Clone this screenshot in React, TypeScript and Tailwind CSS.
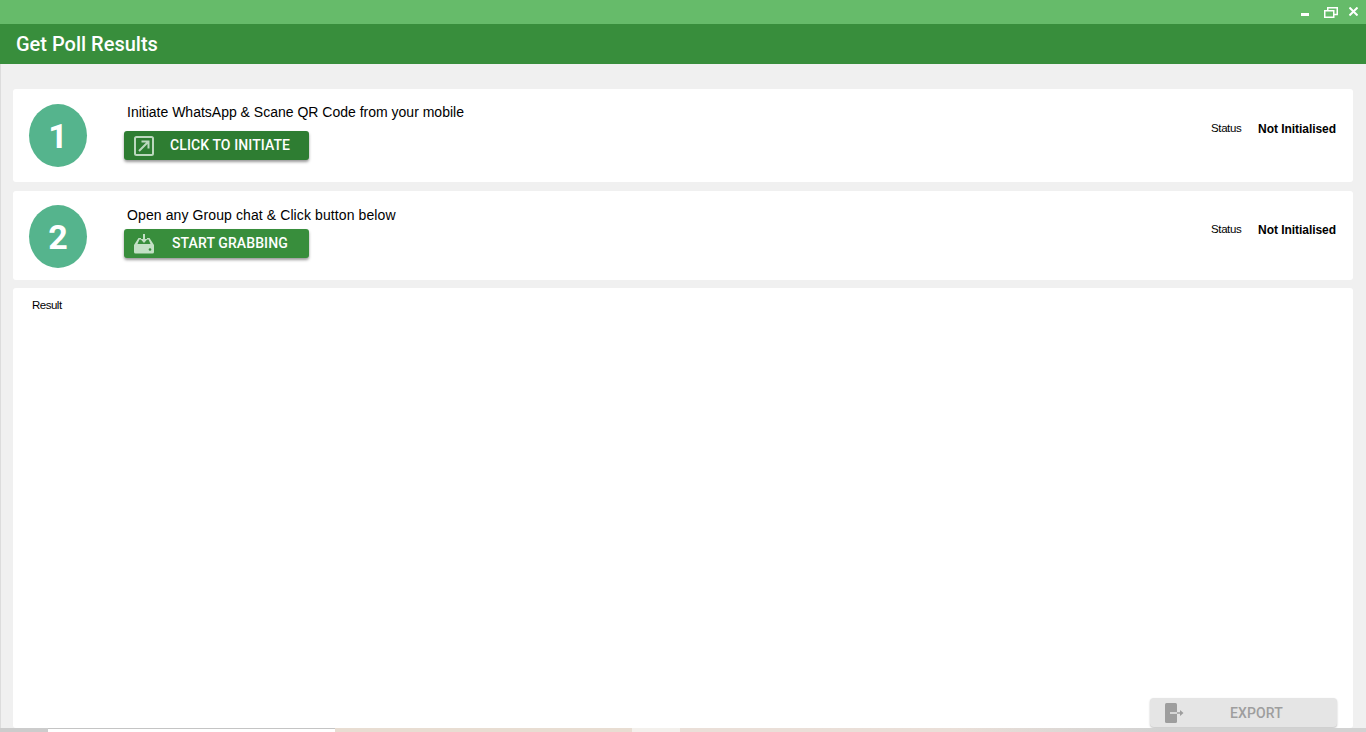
const Card = ({ step, text, textClass, btnClass, statusTop, height, mt, circleTop, icon, label, labelPl }: {
  step: string; text: string; textClass: string; btnClass: string; statusTop: string; height: string; mt: string;
  circleTop: string; icon: React.ReactNode; label: string; labelPl: string;
}) => (
  <section className={`flex bg-white rounded-[3px] pl-4 pr-[17px] ${height} ${mt}`}>
    <div className={`flex h-[63px] w-[58px] shrink-0 items-center justify-center rounded-[50%] bg-[#55b48d] pt-[2px] font-['Roboto',sans-serif] text-[34px] font-bold text-white ${circleTop}`}>
      {step}
    </div>
    <div className="ml-[37px] flex flex-col items-start">
      <p className={`ml-[3px] font-['Liberation_Sans',sans-serif] text-sm leading-4 text-black ${textClass}`}>{text}</p>
      <button className={`flex h-[29px] w-[185px] items-center rounded-[3px] pl-[10px] font-['Roboto',sans-serif] text-sm font-medium tracking-[0.1px] text-white shadow-[0_2px_3px_rgba(0,0,0,0.4)] ${btnClass}`}>
        {icon}
        <span className={`pb-px ${labelPl}`}>{label}</span>
      </button>
    </div>
    <div className={`ml-auto flex h-4 items-center font-['Liberation_Sans',sans-serif] text-black ${statusTop}`}>
      <span className="w-[47px] text-[11.5px] tracking-[-0.4px]">Status</span>
      <span className="text-xs font-bold tracking-[-0.05px]">Not Initialised</span>
    </div>
  </section>
);

const InitiateIcon = () => (
  <svg width="20" height="20" viewBox="0 0 20 20" fill="none" stroke="#bcd8be" strokeWidth="2" className="shrink-0">
    <rect x="1" y="1" width="18" height="18" rx="1.5" />
    <path d="M5 15 14 6M7.500 5.500h7V12.500" />
  </svg>
);

const GrabIcon = () => (
  <svg width="20" height="20" viewBox="0 0 20 20" fill="#c3e0c5" className="shrink-0">
    <path d="M9 0h2v5h2.500L10 9 6.500 5H9z" />
    <path d="M4.500 4H7v1.500H5.400L3.500 10h13l-1.900-4.500H13V4h2.500L20 11v7a1.500 1.500 0 0 1-1.500 1.500h-17A1.500 1.500 0 0 1 0 18v-7z" />
    <circle cx="16" cy="15.500" r="1.300" fill="#388e3c" />
  </svg>
);

export default function App() {
  return (
    <div className="flex h-[732px] flex-col overflow-hidden bg-[#f0f0f0]">
      <div className="flex h-6 shrink-0 items-start justify-end bg-[#66bb6a] pr-2 pt-[7px]">
        <svg width="8" height="3" viewBox="0 0 8 3" fill="white" className="mt-[6px]">
          <rect width="8" height="3" />
        </svg>
        <svg width="14" height="11" viewBox="0 0 14 11" fill="none" stroke="white" strokeWidth="1.500" className="ml-[15px]">
          <rect x="0.750" y="3.750" width="9" height="6.500" />
          <path d="M3.750 3.500V0.750h9.500V7.500H10" />
        </svg>
        <svg width="9" height="9" viewBox="0 0 9 9" stroke="white" strokeWidth="2" className="ml-[11px]">
          <path d="M0.500 0.500l8 8M8.500 0.500l-8 8" />
        </svg>
      </div>
      <header className="flex h-10 shrink-0 items-center bg-[#388e3c] pl-4 font-['Roboto',sans-serif] text-xl font-medium text-white">
        Get Poll Results
      </header>

      <main className="flex min-h-0 flex-1 flex-col border-l border-[#dcdcdc] pl-3 pr-[13px]">
        <Card
          step="1"
          text="Initiate WhatsApp & Scane QR Code from your mobile"
          textClass="mt-[15px]"
          btnClass="mt-[11px] bg-[#2e7d32]"
          statusTop="mt-8"
          height="h-[93px]"
          mt="mt-[25px]"
          circleTop="mt-[15px]"
          icon={<InitiateIcon />}
          label="CLICK TO INITIATE"
          labelPl="pl-4"
        />
        <Card
          step="2"
          text="Open any Group chat & Click button below"
          textClass="mt-4 tracking-[0.1px]"
          btnClass="mt-[6px] bg-[#388e3c]"
          statusTop="mt-[31px]"
          height="h-[89px]"
          mt="mt-[9px]"
          circleTop="mt-[14px]"
          icon={<GrabIcon />}
          label="START GRABBING"
          labelPl="pl-[18px]"
        />
        <section className="mt-2 flex h-[440px] flex-col justify-between rounded-[3px] bg-white pr-4 pl-[19px] pb-px">
          <p className="mt-[10px] font-['Liberation_Sans',sans-serif] text-[11.5px] leading-[14px] tracking-[-0.5px] text-black">Result</p>
          <button className="flex h-[29px] w-[187px] items-center self-end rounded-[4px] bg-[#e5e5e5] pl-[15px] font-['Roboto',sans-serif] text-sm font-medium tracking-[0.1px] text-[#9e9e9e] shadow-[0_1px_2px_rgba(0,0,0,0.25)]">
            <svg width="19" height="20" viewBox="0 0 19 20" className="shrink-0">
              <rect width="12" height="20" rx="1.500" fill="#9e9e9e" />
              <rect x="5" y="9.200" width="7" height="1.600" fill="#e5e5e5" />
              <path d="M12 9.200h3V7l3.500 3-3.500 3v-2.200h-3z" fill="#9e9e9e" />
            </svg>
            <span className="pl-[46px]">EXPORT</span>
          </button>
        </section>
      </main>

      <footer className="flex h-1 shrink-0 bg-[#e8dcd6]">
        <div className="w-12 bg-[#cccccc]" />
        <div className="w-[287px] border-t border-[#c4c4c4] bg-white" />
        <div className="w-[297px] bg-[#e8ddd2]" />
        <div className="w-12 bg-[#f3f0ec]" />
        <div className="flex-1 bg-linear-to-r from-[#eadfd8] from-40% to-[#d2d2d2] to-70%" />
      </footer>
    </div>
  );
}
